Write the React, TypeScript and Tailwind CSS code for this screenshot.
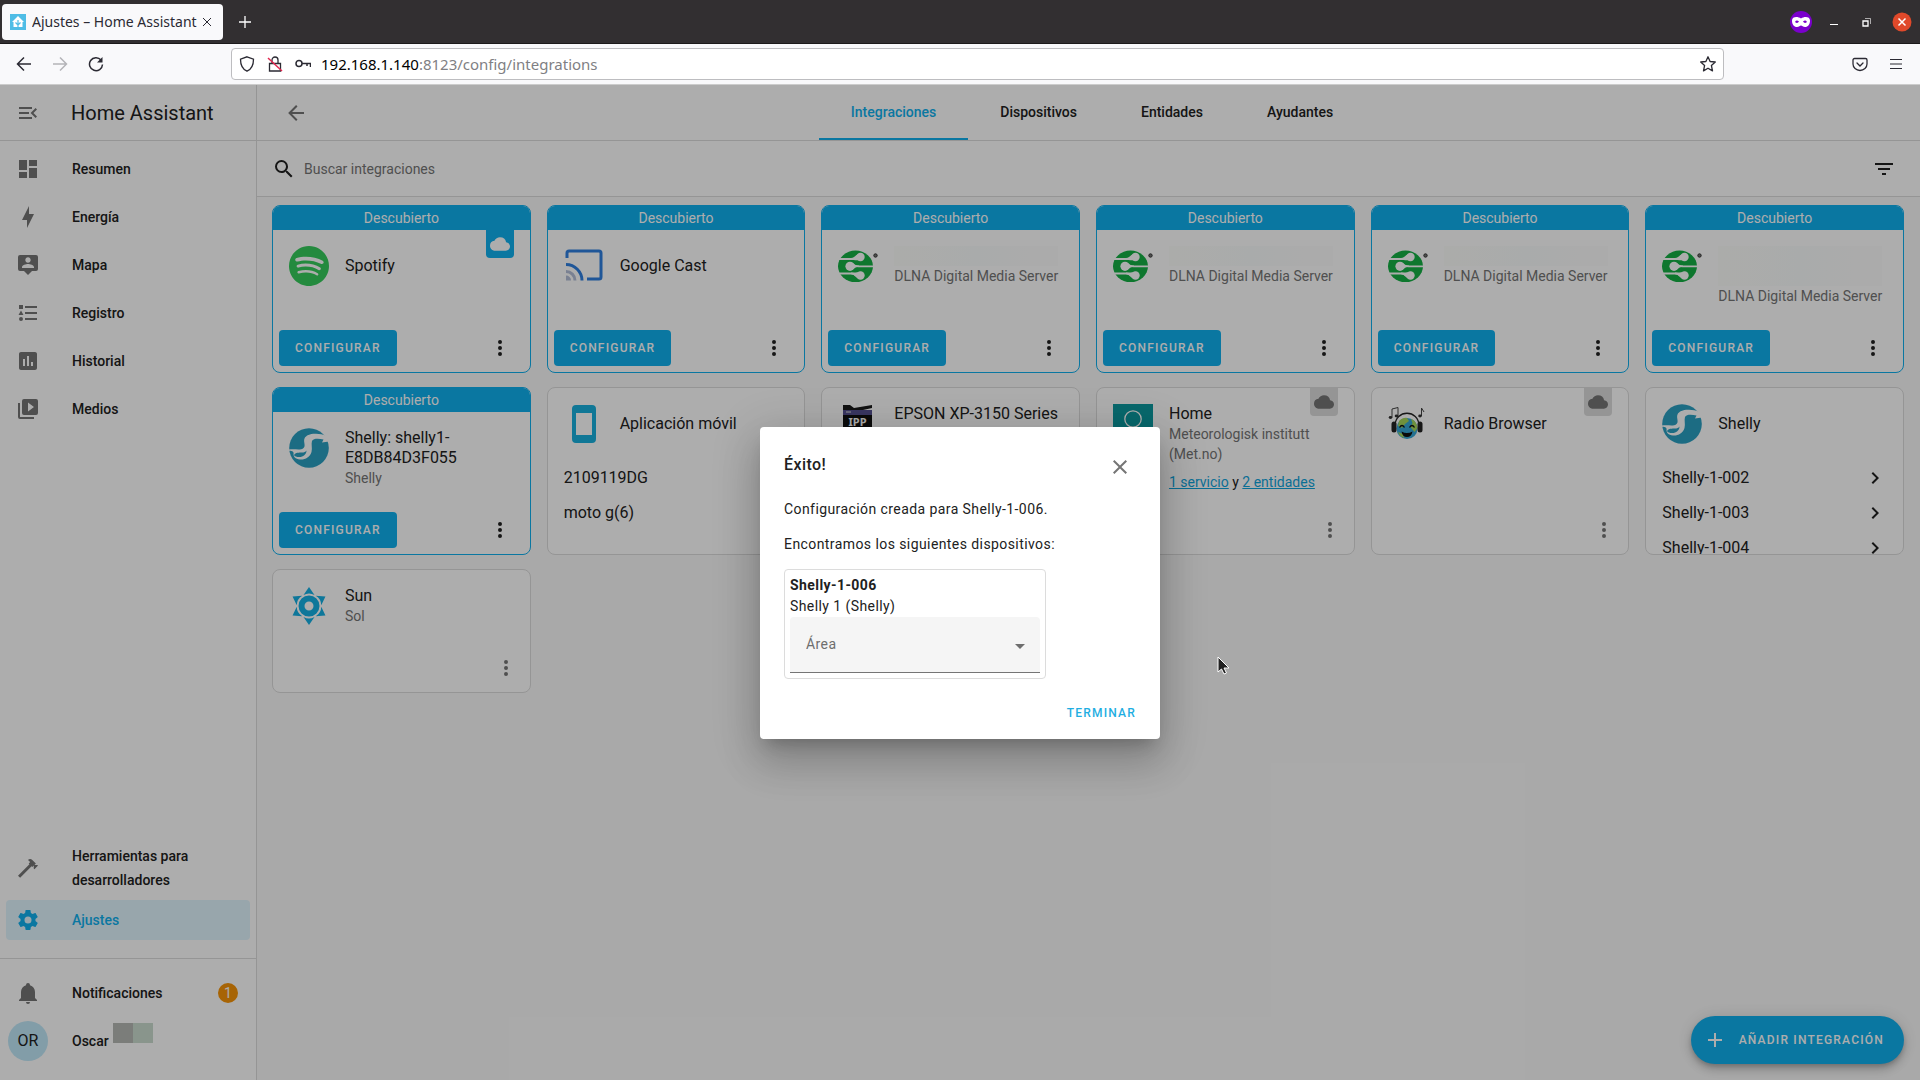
import type { ReactNode } from "react";
import { SiSpotify } from "react-icons/si";

const PATHS = {
  arrowLeft: "M20,11V13H8L13.5,18.5L12.08,19.92L4.16,12L12.08,4.08L13.5,5.5L8,11H20Z",
  menuOpen:
    "M21,15.61L19.59,17L14.58,12L19.59,7L21,8.39L17.44,12L21,15.61M3,6H16V8H3V6M3,13V11H13V13H3M3,18V16H16V18H3Z",
  dashboard: "M13,3V9H21V3M13,21H21V11H13M3,21H11V15H3M3,13H11V3H3V13Z",
  bolt: "M11 15H6L13 1V9H18L11 23V15Z",
  map: "M20,2H4A2,2 0 0,0 2,4V16A2,2 0 0,0 4,18H8L12,22L16,18H20A2,2 0 0,0 22,16V4A2,2 0 0,0 20,2M12,4.3C13.5,4.3 14.7,5.5 14.7,7C14.7,8.5 13.5,9.7 12,9.7C10.5,9.7 9.3,8.5 9.3,7C9.3,5.5 10.5,4.3 12,4.3M18,15H6V14.1C6,12.1 10,11 12,11C14,11 18,12.1 18,14.1V15Z",
  list: "M5,9.5L7.5,14H2.5L5,9.5M3,4H7V8H3V4M5,20A2,2 0 0,0 7,18A2,2 0 0,0 5,16A2,2 0 0,0 3,18A2,2 0 0,0 5,20M9,5V7H21V5H9M9,19H21V17H9V19M9,13H21V11H9V13Z",
  chart:
    "M9 17H7V10H9V17M13 17H11V7H13V17M17 17H15V13H17V17M19 3H5C3.89 3 3 3.89 3 5V19C3 20.1 3.9 21 5 21H19C20.1 21 21 20.1 21 19V5C21 3.89 20.1 3 19 3Z",
  media:
    "M4,6H2V20A2,2 0 0,0 4,22H18V20H4V6M20,2H8A2,2 0 0,0 6,4V16A2,2 0 0,0 8,18H20A2,2 0 0,0 22,16V4A2,2 0 0,0 20,2M12,14.5V5.5L18,10L12,14.5Z",
  hammer:
    "M2,19.63L13.43,8.2L12.72,7.5L14.14,6.07L12,3.89C13.2,2.7 15.09,2.7 16.27,3.89L19.87,7.5L18.45,8.91H21.29L22,9.62L18.45,13.21L17.74,12.5V9.62L16.27,11.04L15.56,10.33L4.13,21.76L2,19.63Z",
  cog: "M12,15.5A3.5,3.5 0 0,1 8.5,12A3.5,3.5 0 0,1 12,8.5A3.5,3.5 0 0,1 15.5,12A3.5,3.5 0 0,1 12,15.5M19.43,12.97C19.47,12.65 19.5,12.33 19.5,12C19.5,11.67 19.47,11.34 19.43,11L21.54,9.37C21.73,9.22 21.78,8.95 21.66,8.73L19.66,5.27C19.54,5.05 19.27,4.96 19.05,5.05L16.56,6.05C16.04,5.66 15.5,5.32 14.87,5.07L14.5,2.42C14.46,2.18 14.25,2 14,2H10C9.75,2 9.54,2.18 9.5,2.42L9.13,5.07C8.5,5.32 7.96,5.66 7.44,6.05L4.95,5.05C4.73,4.96 4.46,5.05 4.34,5.27L2.34,8.73C2.21,8.95 2.27,9.22 2.46,9.37L4.57,11C4.53,11.34 4.5,11.67 4.5,12C4.5,12.33 4.53,12.65 4.57,12.97L2.46,14.63C2.27,14.78 2.21,15.05 2.34,15.27L4.34,18.73C4.46,18.95 4.73,19.03 4.95,18.95L7.44,17.94C7.96,18.34 8.5,18.68 9.13,18.93L9.5,21.58C9.54,21.82 9.75,22 10,22H14C14.25,22 14.46,21.82 14.5,21.58L14.87,18.93C15.5,18.67 16.04,18.34 16.56,17.94L19.05,18.95C19.27,19.03 19.54,18.95 19.66,18.73L21.66,15.27C21.78,15.05 21.73,14.78 21.54,14.63L19.43,12.97Z",
  bell: "M21,19V20H3V19L5,17V11C5,7.9 7.03,5.17 10,4.29C10,4.19 10,4.1 10,4A2,2 0 0,1 12,2A2,2 0 0,1 14,4C14,4.1 14,4.19 14,4.29C16.97,5.17 19,7.9 19,11V17L21,19M14,21A2,2 0 0,1 12,23A2,2 0 0,1 10,21",
  magnify:
    "M9.5,3A6.5,6.5 0 0,1 16,9.5C16,11.11 15.41,12.59 14.44,13.73L14.71,14H15.5L20.5,19L19,20.5L14,15.5V14.71L13.73,14.44C12.59,15.41 11.11,16 9.5,16A6.5,6.5 0 0,1 3,9.5A6.5,6.5 0 0,1 9.5,3M9.5,5C7,5 5,7 5,9.5C5,12 7,14 9.5,14C12,14 14,12 14,9.5C14,7 12,5 9.5,5Z",
  filter: "M6,13H18V11H6M3,6V8H21V6M10,18H14V16H10V18Z",
  cloud:
    "M19.35 10.04A7.49 7.49 0 0 0 12 4C9.11 4 6.6 5.64 5.35 8.04A5.994 5.994 0 0 0 0 14c0 3.31 2.69 6 6 6h13c2.76 0 5-2.24 5-5 0-2.64-2.05-4.78-4.65-4.96z",
  dots: "M12,16A2,2 0 0,1 14,18A2,2 0 0,1 12,20A2,2 0 0,1 10,18A2,2 0 0,1 12,16M12,10A2,2 0 0,1 14,12A2,2 0 0,1 12,14A2,2 0 0,1 10,12A2,2 0 0,1 12,10M12,4A2,2 0 0,1 14,6A2,2 0 0,1 12,8A2,2 0 0,1 10,6A2,2 0 0,1 12,4Z",
  plus: "M19,13H13V19H11V13H5V11H11V5H13V11H19V13Z",
  chevron: "M8.59,16.58L13.17,12L8.59,7.41L10,6L16,12L10,18L8.59,16.58Z",
  close:
    "M19,6.41L17.59,5L12,10.59L6.41,5L5,6.41L10.59,12L5,17.59L6.41,19L12,13.41L17.59,19L19,17.59L13.41,12L19,6.41Z",
};

type IconName = keyof typeof PATHS;

function Icon({ name, className = "size-6" }: { name: IconName; className?: string }) {
  return (
    <svg viewBox="0 0 24 24" className={`shrink-0 ${className}`} fill="currentColor" aria-hidden="true">
      <path d={PATHS[name]} />
    </svg>
  );
}

/* ---------- integration logos ---------- */

function CastLogo() {
  return (
    <svg viewBox="0 0 40 40" className="size-10" fill="none" strokeWidth="3">
      <path d="M3 12V7a2 2 0 0 1 2-2h30a2 2 0 0 1 2 2v24a2 2 0 0 1-2 2H23" stroke="#2f7fe0" />
      <path d="M2 18.5a16 16 0 0 1 16 16" stroke="#2f7fe0" />
      <path d="M2 25.5a9 9 0 0 1 9 9" stroke="#b4bfd8" />
      <path d="M2 29.5a5 5 0 0 1 5 5H2z" fill="#b4bfd8" stroke="none" />
    </svg>
  );
}

function DlnaLogo() {
  return (
    <svg viewBox="0 0 40 40" className="size-10">
      <ellipse cx="17.500" cy="20.300" rx="17.500" ry="15.800" fill="#15b045" />
      <g fill="none" stroke="#fff" strokeWidth="1.800" strokeLinecap="round">
        <path d="M0 13h13c3.500 0 4.500-1.500 8-1.800" />
        <path d="M37 20.300H22c-3 0-4-.5-9-.5" />
        <path d="M0 27.500h13c3.500 0 4.500 1.500 8 1.800" />
      </g>
      <g fill="#fff">
        <circle cx="22.500" cy="11" r="4.200" />
        <circle cx="12" cy="20.300" r="4.600" />
        <circle cx="22.500" cy="29.500" r="4.200" />
        <path d="M14 16.800c2.500 1 3 2.800 7 2.800v1.400c-4 0-4.500 1.800-7 2.800z" />
        <path d="M13 12.300c3 0 3.500-2.500 7-4l1 6c-3 0-4-.3-8-.3z" />
        <path d="M13 28.200c3 0 3.500 2.500 7 4l1-6c-3 0-4 .3-8 .3z" />
      </g>
      <circle cx="37.500" cy="9.500" r="1.700" fill="#777" stroke="#333" strokeWidth="1" />
    </svg>
  );
}

function ShellyLogo() {
  return (
    <svg viewBox="0 0 40 40" className="size-10">
      <circle cx="20" cy="20" r="19.800" fill="#2a9fc2" />
      <path
        d="M0 21.500C5 20.500 11 22.500 14 20.500C17.500 18 14 14 15.500 10.500C17 7 22 5.500 27 5.800C31 6 34 6.500 36 7.500L40 8V13.500L33 14.500L34.500 11.500C30 10.500 24.500 10 23 13C22 16 23.500 20 22.500 24C21 29 16 32 11 31.500C6 31 5 29 4.500 26.500C5 24 4 23 0 22.800z"
        fill="#fff"
      />
      <path d="M5 27c1.500-2.500 5-2.500 8-2.500 2 0 3.500-.5 4.500-2 0 4-3.500 6.500-7 6.500-3 0-4.800-.5-5.500-2z" fill="#2a9fc2" />
    </svg>
  );
}

function PhoneLogo() {
  return (
    <svg viewBox="0 0 40 40" className="size-10">
      <path
        d="M12 1h16a4 4 0 0 1 4 4v30a4 4 0 0 1-4 4H12a4 4 0 0 1-4-4V5a4 4 0 0 1 4-4zm0 8v22h16V9z"
        fill="#18b0dd"
        fillRule="evenodd"
      />
    </svg>
  );
}

function IppLogo() {
  return (
    <svg viewBox="0 0 40 40" className="size-10">
      <path d="M5 1h7l4 3 18-3v3l-9 2H5z" fill="#1a1a1a" />
      <path d="M5 6h29v5H5z" fill="#55508f" />
      <path d="M8 7.500h5v1H8z" fill="#ddd" />
      <path d="M5 11h29v27H5z" fill="#111" />
      <text x="19.500" y="22" textAnchor="middle" fontSize="11" fontWeight="700" fontFamily="Noto Sans" fill="#fff">
        IPP
      </text>
    </svg>
  );
}

function MetLogo() {
  return (
    <svg viewBox="0 0 40 40" className="size-10">
      <path d="M0 0h40v40H0z" fill="#0c9aa0" />
      <circle cx="20" cy="15" r="8.200" fill="none" stroke="#fff" strokeWidth="1.300" />
      <path d="M6 30q7-4 14 0t14 0" fill="none" stroke="#fff" strokeWidth="1.300" />
    </svg>
  );
}

function RadioLogo() {
  return (
    <svg viewBox="0 0 40 40" className="size-10">
      <circle cx="19" cy="24.500" r="10.500" fill="#35a7d6" />
      <path d="M11 17c3-3 6-3.500 8-3l2 3-4 3-3 4-4-2zM23 15c4 1 6 5 6.500 9l-3 4-4-5 2-4zM10 28l5 2 1 4c-3-1-5-3-6-6z" fill="#a5d65a" />
      <path d="M7 22C7 5 31 5 31 22" fill="none" stroke="#222" strokeWidth="1.300" />
      <rect x="3.500" y="17.500" width="5" height="11" rx="2.500" fill="#222" />
      <rect x="29.500" y="17.500" width="5" height="11" rx="2.500" fill="#222" />
      <path d="M11.500 23.500q2.500-4 5 0M21.500 23.500q2.500-4 5 0" fill="none" stroke="#111" strokeWidth="1.300" />
      <path d="M13.500 27.500q5.500 3 11 0-1 5.500-5.500 5.500t-5.500-5.500z" fill="#111" />
      <path d="M4 13.500V5l6-1.500V12M33.500 12V4l2.500 4" fill="none" stroke="#444" strokeWidth="1" />
      <ellipse cx="2.500" cy="13.500" rx="1.800" ry="1.400" fill="#333" />
      <ellipse cx="8.500" cy="12" rx="1.800" ry="1.400" fill="#333" />
      <ellipse cx="32" cy="12" rx="1.800" ry="1.400" fill="#333" />
    </svg>
  );
}

function SunLogo() {
  return (
    <svg viewBox="0 0 40 40" className="size-10" fill="#16b0e4">
      {[0, 60, 120, 180, 240, 300].map((angle) => (
        <path key={angle} d="M20 1l5.500 8q-5.500-3-11 0z" transform={`rotate(${angle} 20 20)`} />
      ))}
      <path d="M20 9.500a10.500 10.500 0 1 0 0 21 10.500 10.500 0 0 0 0-21zm0 6a4.500 4.500 0 1 1 0 9 4.500 4.500 0 0 1 0-9z" />
    </svg>
  );
}

/* ---------- browser chrome ---------- */

function BrowserChrome() {
  return (
    <header className="shrink-0 font-['Noto_Sans',sans-serif]">
      <div className="flex h-11 items-center border-b border-[#1c1a1b] bg-[#322f31] pl-0.5 pr-2">
        <div className="flex h-9 w-[221px] items-center rounded bg-[#f9f9fb] px-2 text-[#2b2a33]">
          <svg viewBox="0 0 16 16" className="size-4 shrink-0">
            <path d="M0 0h16v16H0z" fill="#4fbde6" />
            <path d="M8 2l6 6h-1.500v5h-9V8H2z" fill="#fff" />
            <path d="M8 13V6M8 11L5.500 8.500M8 11l2.500-2.500" stroke="#4fbde6" strokeWidth="1.200" />
          </svg>
          <span className="ml-1.5 w-[170px] overflow-hidden whitespace-nowrap text-sm">Ajustes – Home Assistant</span>
          <button type="button" aria-label="Cerrar pestaña">
            <svg viewBox="0 0 10 10" className="size-2.5" stroke="currentColor" fill="none">
              <path d="M1 1l8 8M9 1l-8 8" />
            </svg>
          </button>
        </div>
        <button type="button" aria-label="Nueva pestaña" className="ml-4 text-white">
          <svg viewBox="0 0 12 12" className="size-3" stroke="currentColor" strokeWidth="1.300">
            <path d="M6 0v12M0 6h12" />
          </svg>
        </button>
        <div className="ml-auto flex items-center text-white">
          <svg viewBox="0 0 22 22" className="size-[22px]">
            <circle cx="11" cy="11" r="11" fill="#7a00cc" />
            <path
              d="M2 9.500C2 5.500 7.500 5 11 7.500 14.500 5 20 5.500 20 9.500c0 4-2 6.500-5 6.500-2 0-3-1.500-4-1.500S9 16 7 16c-3 0-5-2.500-5-6.500zM5 11q2.500 2 4-.5-2.500-2-4 .5zM17 11q-2.500 2-4-.5 2.500-2 4 .5z"
              fill="#fff"
              fillRule="evenodd"
            />
          </svg>
          <button type="button" aria-label="Minimizar" className="ml-[18px]">
            <svg viewBox="0 0 8 8" className="size-2" fill="currentColor">
              <path d="M0 6h8v1H0z" />
            </svg>
          </button>
          <button type="button" aria-label="Restaurar" className="ml-6">
            <svg viewBox="0 0 10 10" className="size-2.5" fill="none" stroke="currentColor">
              <path d="M1 4h5v5H1z" strokeWidth="1.300" />
              <path d="M3 1.500h5.500V7" opacity=".6" />
            </svg>
          </button>
          <button type="button" aria-label="Cerrar" className="ml-5">
            <svg viewBox="0 0 20 20" className="size-5">
              <circle cx="10" cy="10" r="9.500" fill="#e0492a" />
              <path d="M6.500 6.500l7 7M13.500 6.500l-7 7" stroke="#fff" strokeWidth="1.500" />
            </svg>
          </button>
        </div>
      </div>

      <div className="flex h-[41px] items-center border-b border-[#ccc] bg-[#f9f9fb] pl-4 pr-4 text-[#2b2a33]">
        <div className="flex w-[215px] items-center gap-5">
          <button type="button" aria-label="Atrás">
            <svg viewBox="0 0 16 16" className="size-4" fill="none" stroke="currentColor" strokeWidth="1.500">
              <path d="M15 8H1.500M8 1.500L1.500 8 8 14.500" />
            </svg>
          </button>
          <button type="button" aria-label="Adelante" disabled className="text-[#b4b4b8]">
            <svg viewBox="0 0 16 16" className="size-4" fill="none" stroke="currentColor" strokeWidth="1.500">
              <path d="M1 8h13.500M8 1.500L14.500 8 8 14.500" />
            </svg>
          </button>
          <button type="button" aria-label="Recargar">
            <svg viewBox="0 0 16 16" className="size-4" fill="none" stroke="currentColor" strokeWidth="1.500">
              <path d="M13 4a6.500 6.500 0 1 0 1.500 4.500" />
              <path d="M14.500 1v5.500H9z" fill="currentColor" stroke="none" />
            </svg>
          </button>
        </div>
        <div className="flex h-8 flex-1 items-center rounded border border-[#bdbdc0] bg-white px-[7px]">
          <svg viewBox="0 0 16 16" className="size-4" fill="none" stroke="currentColor" strokeWidth="1.300">
            <path d="M8 .8l6.500 2.400c0 6-2 10-6.500 12C3.500 13.200 1.500 9.200 1.500 3.200z" />
          </svg>
          <svg viewBox="0 0 16 16" className="ml-3 size-4" fill="none" strokeWidth="1.300">
            <path d="M2.500 7.500h11v7.500h-11zM5 7.500V4a3 3 0 0 1 6 0v3.500" stroke="currentColor" />
            <path d="M1 2l14 13" stroke="#e22850" strokeWidth="1.500" />
          </svg>
          <svg viewBox="0 0 16 16" className="ml-3 size-4" fill="none" stroke="currentColor" strokeWidth="1.500">
            <circle cx="4" cy="7.500" r="3" />
            <path d="M7 7.500h8.500V11M12 7.500V10" />
          </svg>
          <p className="ml-2.5 text-[15px] text-[#7f7f84]">
            <span className="text-black">192.168.1.140</span>:8123/config/integrations
          </p>
          <button type="button" aria-label="Guardar en marcadores" className="ml-auto">
            <svg viewBox="0 0 16 16" className="size-4" fill="none" stroke="currentColor" strokeWidth="1.300" strokeLinejoin="round">
              <path d="M8 .8l2.100 4.700 5.200.5-3.900 3.500 1.100 5.400L8 12.200l-4.500 2.700 1.100-5.400L.7 6l5.200-.5z" />
            </svg>
          </button>
        </div>
        <div className="flex w-[180px] items-center justify-end gap-5">
          <button type="button" aria-label="Pocket">
            <svg viewBox="0 0 16 16" className="size-4" fill="none" stroke="currentColor" strokeWidth="1.300" strokeLinecap="round">
              <path d="M2.500 2.500h11a1.500 1.500 0 0 1 1.500 1.500v4a7 6.500 0 0 1-14 0V4a1.500 1.500 0 0 1 1.500-1.500zM5 7l3 3 3-3" />
            </svg>
          </button>
          <button type="button" aria-label="Menú">
            <svg viewBox="0 0 16 16" className="size-4" stroke="currentColor" strokeWidth="1.200">
              <path d="M2 3.500h12M2 8h12M2 12.500h12" />
            </svg>
          </button>
        </div>
      </div>
    </header>
  );
}

/* ---------- sidebar ---------- */

const NAV: { label: string; icon: IconName }[] = [
  { label: "Resumen", icon: "dashboard" },
  { label: "Energía", icon: "bolt" },
  { label: "Mapa", icon: "map" },
  { label: "Registro", icon: "list" },
  { label: "Historial", icon: "chart" },
  { label: "Medios", icon: "media" },
];

function NavItem({ label, icon, active = false, badge }: { label: string; icon: IconName; active?: boolean; badge?: number }) {
  return (
    <a
      href="#"
      className={`mx-1.5 my-1 flex min-h-10 items-center gap-8 rounded px-2.5 text-sm leading-6 font-medium ${
        active ? "bg-[#e1f5fe] text-[#10b0ee]" : "text-[#212121]"
      }`}
    >
      <Icon name={icon} className={active ? "size-6" : "size-6 text-[#757575]"} />
      <span className="w-[130px]">{label}</span>
      {badge && (
        <span className="ml-auto mr-0.5 flex size-5 shrink-0 items-center justify-center rounded-full bg-[#f79408] font-normal text-white">
          {badge}
        </span>
      )}
    </a>
  );
}

function Sidebar() {
  return (
    <aside className="flex w-[257px] shrink-0 flex-col border-r border-[#dcdcdc] bg-white">
      <div className="flex h-14 shrink-0 items-center border-b border-[#dcdcdc] pl-4">
        <button type="button" aria-label="Contraer barra lateral" className="text-[#757575]">
          <Icon name="menuOpen" />
        </button>
        <h1 className="ml-[31px] text-xl text-[#212121]">Home Assistant</h1>
      </div>
      <nav className="flex flex-1 flex-col pt-1">
        {NAV.map((item) => (
          <NavItem key={item.label} {...item} />
        ))}
        <div className="flex-1" />
        <NavItem label="Herramientas para desarrolladores" icon="hammer" />
        <NavItem label="Ajustes" icon="cog" active />
      </nav>
      <div className="mt-3.5 flex flex-col border-t border-[#dcdcdc] pt-2.5 pb-[15px]">
        <NavItem label="Notificaciones" icon="bell" badge={1} />
        <a href="#" className="mx-2 my-1 flex h-10 items-center text-sm font-medium text-[#212121]">
          <span className="flex size-10 items-center justify-center rounded-full bg-[#c0e8f8] text-base font-normal">OR</span>
          <span className="ml-6">Oscar</span>
          <span className="mb-4 ml-1 flex">
            <span className="size-5 bg-[#b5b9b4]" />
            <span className="size-5 bg-[#cbdccf]" />
          </span>
        </a>
      </div>
    </aside>
  );
}

/* ---------- cards ---------- */

type Integration = {
  id: string;
  logo: ReactNode;
  title?: string;
  // number of lines taken by a name that is blanked out
  hidden?: 1 | 2;
  subtitle?: string;
  links?: boolean;
  entries?: string[];
  arrows?: boolean;
  discovered?: boolean;
  cloud?: boolean;
  menu?: boolean;
  short?: boolean;
};

const INTEGRATIONS: Integration[] = [
  { id: "spotify", logo: <SiSpotify className="size-10 text-[#35cc5c]" />, title: "Spotify", discovered: true, cloud: true },
  { id: "cast", logo: <CastLogo />, title: "Google Cast", discovered: true },
  { id: "dlna-1", logo: <DlnaLogo />, hidden: 1, subtitle: "DLNA Digital Media Server", discovered: true },
  { id: "dlna-2", logo: <DlnaLogo />, hidden: 1, subtitle: "DLNA Digital Media Server", discovered: true },
  { id: "dlna-3", logo: <DlnaLogo />, hidden: 1, subtitle: "DLNA Digital Media Server", discovered: true },
  { id: "dlna-4", logo: <DlnaLogo />, hidden: 2, subtitle: "DLNA Digital Media Server", discovered: true },
  { id: "shelly-new", logo: <ShellyLogo />, title: "Shelly: shelly1-E8DB84D3F055", subtitle: "Shelly", discovered: true },
  { id: "mobile", logo: <PhoneLogo />, title: "Aplicación móvil", entries: ["2109119DG", "moto g(6)"] },
  { id: "ipp", logo: <IppLogo />, title: "EPSON XP-3150 Series" },
  { id: "met", logo: <MetLogo />, title: "Home", subtitle: "Meteorologisk institutt (Met.no)", links: true, cloud: true, menu: true },
  { id: "radio", logo: <RadioLogo />, title: "Radio Browser", cloud: true, menu: true },
  { id: "shelly", logo: <ShellyLogo />, title: "Shelly", entries: ["Shelly-1-002", "Shelly-1-003", "Shelly-1-004"], arrows: true },
  { id: "sun", logo: <SunLogo />, title: "Sun", subtitle: "Sol", menu: true, short: true },
];

function IntegrationCard({ item }: { item: Integration }) {
  return (
    <article
      className={`relative flex flex-col overflow-hidden rounded-lg border bg-white ${item.short ? "h-31" : "h-42"} ${
        item.discovered ? "border-[#10b0ee]" : "border-[#dcdcdc]"
      }`}
    >
      {item.discovered && (
        <div className="h-6 shrink-0 bg-[#10b0ee] text-center text-sm leading-6 text-white">Descubierto</div>
      )}
      {item.cloud && (
        <div
          className={`absolute right-4 flex size-7 items-center justify-center rounded-b ${
            item.discovered ? "top-6 bg-[#10b0ee] text-white" : "top-0 bg-[#dcdcdc] text-[#757575]"
          }`}
        >
          <Icon name="cloud" className="size-5" />
        </div>
      )}

      <div className="flex shrink-0 gap-4 px-4 pt-4">
        <div className="shrink-0">{item.logo}</div>
        <div className={`flex min-h-10 flex-col text-sm leading-5 text-[#757575] ${item.id === "ipp" ? "" : "justify-center"}`}>
          {item.title && <h2 className="text-base leading-5 text-[#212121]">{item.title}</h2>}
          {item.hidden && (
            <div
              className={`bg-linear-to-r from-[#fdfefb] via-[#fafdfc] to-[#fdfcfc] ${item.hidden === 2 ? "h-10" : "h-5"}`}
            />
          )}
          {item.subtitle && <p>{item.subtitle}</p>}
          {item.links && (
            <p className="mt-2 text-[#212121]">
              <a href="#" className="text-[#10a4dc] underline">1 servicio</a> y{" "}
              <a href="#" className="text-[#10a4dc] underline">2 entidades</a>
            </p>
          )}
        </div>
      </div>

      {item.entries && (
        <ul className="pt-4 text-base text-[#212121]">
          {item.entries.map((entry) => (
            <li key={entry} className="flex h-[35px] items-center justify-between px-4">
              {entry}
              {item.arrows && <Icon name="chevron" />}
            </li>
          ))}
        </ul>
      )}

      {item.discovered && (
        <div className="mt-auto flex items-center justify-between p-1.5">
          <button
            type="button"
            className="h-9 rounded bg-[#10b0ee] px-4 text-xs font-medium tracking-widest text-white uppercase"
          >
            Configurar
          </button>
          <button type="button" aria-label="Más opciones" className="flex w-12 justify-center text-[#212121]">
            <Icon name="dots" />
          </button>
        </div>
      )}
      {item.menu && (
        <button
          type="button"
          aria-label="Más opciones"
          className="absolute right-0 bottom-0 flex size-12 items-center justify-center text-[#757575]"
        >
          <Icon name="dots" />
        </button>
      )}
    </article>
  );
}

/* ---------- main panel ---------- */

const TABS = ["Integraciones", "Dispositivos", "Entidades", "Ayudantes"];

function MainPanel() {
  return (
    <main className="relative flex min-w-0 flex-1 flex-col bg-[#fafafa]">
      <div className="flex h-14 shrink-0 items-center border-b border-[#dcdcdc] bg-white pl-[15px] pr-14">
        <button type="button" aria-label="Volver" className="flex w-12 justify-center text-[#757575]">
          <Icon name="arrowLeft" />
        </button>
        <nav className="flex h-full flex-1 justify-center text-sm font-medium">
          {TABS.map((tab, i) => (
            <a
              key={tab}
              href="#"
              className={`flex items-center border-b-2 px-8 ${
                i === 0 ? "border-[#10b0ee] text-[#10b0ee]" : "border-transparent text-[#212121]"
              }`}
            >
              {tab}
            </a>
          ))}
        </nav>
      </div>

      <div className="flex h-14 shrink-0 items-center border-b border-[#dcdcdc] bg-white pl-[15px] pr-6 text-[#212121]">
        <Icon name="magnify" />
        <input
          type="search"
          aria-label="Buscar integraciones"
          placeholder="Buscar integraciones"
          className="ml-2 flex-1 bg-transparent text-sm outline-none placeholder:text-[#757575]"
        />
        <button type="button" aria-label="Filtrar">
          <Icon name="filter" />
        </button>
      </div>

      <section className="grid grid-cols-6 items-start gap-x-4 gap-y-3.5 pt-2 pr-4 pl-[15px]">
        {INTEGRATIONS.map((item) => (
          <IntegrationCard key={item.id} item={item} />
        ))}
      </section>

      <button
        type="button"
        className="absolute right-4 bottom-4 flex h-12 items-center gap-3 rounded-full bg-[#10b0ee] pr-5 pl-3 text-xs font-medium tracking-widest text-white uppercase shadow-[0_3px_5px_-1px_rgba(0,0,0,0.2),0_6px_10px_rgba(0,0,0,0.14),0_1px_18px_rgba(0,0,0,0.12)]"
      >
        <Icon name="plus" />
        Añadir integración
      </button>
    </main>
  );
}

/* ---------- dialog ---------- */

function SuccessDialog() {
  return (
    <div className="absolute inset-0 z-20 flex items-center justify-center bg-black/32">
      <div
        role="dialog"
        aria-labelledby="dialog-title"
        className="w-[400px] rounded bg-white text-sm tracking-[0.03em] text-[#212121] shadow-[0_11px_15px_-7px_rgba(0,0,0,0.2),0_24px_38px_3px_rgba(0,0,0,0.14),0_9px_46px_8px_rgba(0,0,0,0.12)]"
      >
        <div className="flex items-start justify-between pt-4 pr-4 pl-6">
          <h2 id="dialog-title" className="pt-2.5 text-base font-medium">Éxito!</h2>
          <button type="button" aria-label="Cerrar" className="flex size-12 items-center justify-center text-[#757575]">
            <Icon name="close" />
          </button>
        </div>
        <div className="px-6 pt-2">
          <p className="leading-5">Configuración creada para Shelly-1-006.</p>
          <p className="mt-[15px] leading-5">Encontramos los siguientes dispositivos:</p>
          <div className="mt-[15px] w-[262px] rounded border border-[#dcdcdc] p-[5px]">
            <div className="leading-[21px] font-bold">Shelly-1-006</div>
            <div className="leading-[21px]">Shelly 1 (Shelly)</div>
            <div className="relative">
              <select
                aria-label="Área"
                className="h-14 w-full appearance-none rounded-t border-b border-[#757575] bg-[#f5f5f5] px-4 text-[#6e6e6e] outline-none"
              >
                <option>Área</option>
              </select>
              <svg viewBox="0 0 10 5" className="pointer-events-none absolute top-[27px] right-[15px] h-[5px] w-2.5" fill="#6e6e6e">
                <path d="M0 0h10L5 5z" />
              </svg>
            </div>
          </div>
        </div>
        <div className="flex justify-end p-2 pt-4">
          <button type="button" className="h-9 px-4 text-xs font-medium tracking-widest text-[#1faee2] uppercase">
            Terminar
          </button>
        </div>
      </div>
    </div>
  );
}

export default function App() {
  return (
    <div className="flex h-screen flex-col overflow-hidden font-[Roboto,sans-serif]">
      <BrowserChrome />
      <div className="relative flex min-h-0 flex-1">
        <Sidebar />
        <MainPanel />
        <SuccessDialog />
        <svg viewBox="0 0 13 19" className="absolute top-[571px] left-[1217px] z-30 h-[19px] w-[13px]">
          <path d="M1 1v15l3.500-3 2.500 5 2.500-1-2.500-5h5z" fill="#222" stroke="#fff" />
        </svg>
      </div>
    </div>
  );
}
